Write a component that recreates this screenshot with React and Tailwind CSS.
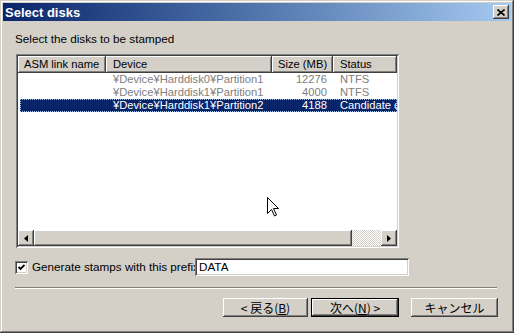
const raised =
  'shadow-[inset_-1px_-1px_#404040,inset_1px_1px_#ffffff,inset_-2px_-2px_#808080,inset_2px_2px_#d4d0c8]'

const rows = [
  { device: '¥Device¥Harddisk0¥Partition1', size: '12276', status: 'NTFS' },
  { device: '¥Device¥Harddisk1¥Partition1', size: '4000', status: 'NTFS' },
  { device: '¥Device¥Harddisk1¥Partition2', size: '4188', status: 'Candidate disk', selected: true },
]

function HeaderCell({ width, children }) {
  return (
    <div
      className={`${width} h-full shrink-0 bg-[#d4d0c8] ${raised} pl-[6px] leading-[17px] whitespace-nowrap overflow-hidden`}
    >
      {children}
    </div>
  )
}

function Arrow({ dir }) {
  return (
    <div className={`w-[16px] h-[16px] shrink-0 bg-[#d4d0c8] ${raised} flex items-center justify-center`}>
      <svg width="4" height="7" viewBox="0 0 4 7">
        {dir === 'left' ? <path d="M4 0 L0 3.5 L4 7 Z" fill="#000" /> : <path d="M0 0 L4 3.5 L0 7 Z" fill="#000" />}
      </svg>
    </div>
  )
}

function Button({ children, isDefault }) {
  return (
    <div className={`h-[19px] ${isDefault ? 'border border-black' : ''} flex`}>
      <div
        className={`flex-1 bg-[#d4d0c8] ${raised} flex items-center justify-center text-[12px] leading-none text-black`}
        style={{ fontFamily: '"Noto Sans CJK JP", "Liberation Sans", sans-serif' }}
      >
        {children}
      </div>
    </div>
  )
}

export default function App() {
  return (
    <div
      className="relative w-[514px] h-[333px] bg-[#d4d0c8] p-[3px] flex flex-col shadow-[inset_-1px_-1px_#404040,inset_1px_1px_#d4d0c8,inset_-2px_-2px_#808080,inset_2px_2px_#ffffff] text-black"
      style={{ fontFamily: '"Liberation Sans", Arial, sans-serif' }}
    >
      {/* title bar */}
      <div className="h-[18px] bg-gradient-to-r from-[#0a246a] to-[#a6caf0] flex items-center justify-between pl-[2px] pr-[2px]">
        <span className="text-white font-bold text-[13px] leading-none">Select disks</span>
        <div className={`w-[16px] h-[14px] bg-[#d4d0c8] ${raised} flex items-center justify-center`}>
          <svg width="8" height="7" viewBox="0 0 8 7">
            <path d="M0.5 0.5 L7.5 6.5 M7.5 0.5 L0.5 6.5" stroke="#000" strokeWidth="1.6" />
          </svg>
        </div>
      </div>

      <div className="flex flex-col pl-[12px] pr-[14px]">
        <div className="mt-[11px] h-[13px] leading-[13px] text-[11.7px] whitespace-nowrap">
          Select the disks to be stamped
        </div>

        {/* list view */}
        <div className="mt-[9px] ml-[1px] w-[383px] h-[194px] bg-white p-[2px] flex flex-col shadow-[inset_1px_1px_#808080,inset_-1px_-1px_#ffffff,inset_2px_2px_#404040,inset_-2px_-2px_#d4d0c8]">
          <div className="h-[17px] flex text-[11.2px] overflow-hidden shrink-0">
            <HeaderCell width="w-[88px]">ASM link name</HeaderCell>
            <HeaderCell width="w-[166px]">
              <span className="pl-[1px]">Device</span>
            </HeaderCell>
            <HeaderCell width="w-[61px]">Size (MB)</HeaderCell>
            <HeaderCell width="w-[64px]">
              <span className="pl-[1px]">Status</span>
            </HeaderCell>
          </div>

          <div className="flex-1 flex flex-col text-[11.2px] overflow-hidden">
            {rows.map((r) => (
              <div
                key={r.device}
                className={`h-[13px] ml-[2px] flex leading-[13px] whitespace-nowrap ${
                  r.selected ? 'bg-[#0a246a] text-white outline-1 outline-dotted outline-[#a6caf0] -outline-offset-1' : 'text-[#808080]'
                }`}
              >
                <div className="w-[86px] shrink-0" />
                <div className="w-[166px] shrink-0 pl-[7px] overflow-hidden">{r.device}</div>
                <div className="w-[61px] shrink-0 pr-[6px] text-right">{r.size}</div>
                <div className="w-[64px] shrink-0 pl-[7px] overflow-hidden">{r.status}</div>
              </div>
            ))}
          </div>

          {/* horizontal scrollbar */}
          <div className="h-[16px] flex shrink-0">
            <Arrow dir="left" />
            <div className={`w-[318px] h-full shrink-0 bg-[#d4d0c8] ${raised}`} />
            <div className="flex-1 h-full bg-[image:repeating-conic-gradient(#ffffff_0%_25%,#d4d0c8_0%_50%)] bg-[length:2px_2px]" />
            <Arrow dir="right" />
          </div>
        </div>

        {/* prefix row */}
        <div className="mt-[10px] h-[18px] flex items-start">
          <div className="mt-[3px] w-[13px] h-[13px] bg-white shrink-0 flex items-center justify-center shadow-[inset_1px_1px_#808080,inset_-1px_-1px_#ffffff,inset_2px_2px_#404040,inset_-2px_-2px_#d4d0c8]">
            <svg width="7" height="7" viewBox="0 0 7 7">
              <path d="M0.5 3 L2.5 5 L6.5 1" stroke="#000" strokeWidth="1.8" fill="none" />
            </svg>
          </div>
          <div className="ml-[4px] w-[163px] shrink-0 overflow-hidden whitespace-nowrap text-[11.7px] leading-[18px]">
            Generate stamps with this prefix
          </div>
          <div className="w-[214px] h-[18px] bg-white pl-[4px] text-[11.7px] leading-[18px] shadow-[inset_1px_1px_#808080,inset_-1px_-1px_#ffffff,inset_2px_2px_#404040,inset_-2px_-2px_#d4d0c8]">
            DATA
          </div>
        </div>

        {/* separator */}
        <div className="mt-[11px] h-[2px] border-t border-t-[#808080] border-b border-b-white" />

        {/* buttons */}
        <div className="mt-[9px] mr-[-1px] flex justify-end">
          <div className="w-[85px]">
            <Button>
              &lt; 戻る(<span className="underline">B</span>)
            </Button>
          </div>
          <div className="ml-[3px] w-[88px]">
            <Button isDefault>
              次へ(<span className="underline">N</span>) &gt;
            </Button>
          </div>
          <div className="ml-[12px] w-[87px]">
            <Button>キャンセル</Button>
          </div>
        </div>
      </div>

      {/* mouse pointer */}
      <svg className="absolute left-[267px] top-[197px]" width="12" height="20" viewBox="0 0 12 20">
        <path
          d="M0.5 0.5 L0.5 16.5 L4.5 12.5 L7.5 19 L9.5 18 L6.5 11.5 L11.5 11.5 Z"
          fill="#fff"
          stroke="#000"
          strokeWidth="1"
        />
      </svg>
    </div>
  )
}
